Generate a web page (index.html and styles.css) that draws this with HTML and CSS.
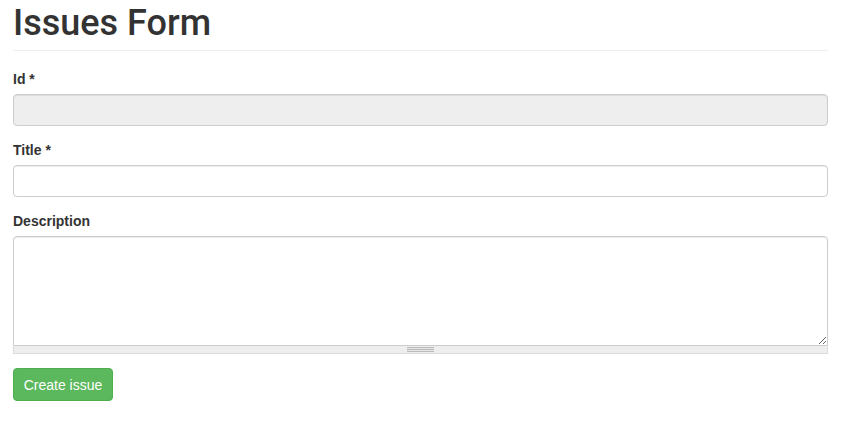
FILE: index.html
```html
<!DOCTYPE html>
<html>
<head>
<meta charset="utf-8">
<link rel="stylesheet" href="styles.css">
</head>
<body>
<div class="container">
  <h1 class="page-header">Issues Form</h1>
  <form class="form">
    <div class="form-group">
      <label class="label">Id *</label>
      <input class="input" type="text" disabled>
    </div>
    <div class="form-group">
      <label class="label">Title *</label>
      <input class="input" type="text">
    </div>
    <div class="form-group">
      <label class="label">Description</label>
      <div class="textarea-wrap">
        <textarea class="textarea"></textarea>
        <div class="grippie"><span class="grip"></span></div>
      </div>
    </div>
    <button type="button" class="btn">Create issue</button>
  </form>
</div>
</body>
</html>
```
FILE: styles.css
```css
* { box-sizing: border-box; }
html, body { margin: 0; padding: 0; background: #fff; }
body {
  font-family: "Liberation Sans", Arial, Helvetica, sans-serif;
  font-size: 14px;
  color: #333;
}
.container {
  width: 815px;
  margin-left: 13px;
}
.page-header {
  margin: 0;
  padding: 3px 0 7px;
  font-family: Roboto, "Liberation Sans", sans-serif;
  font-size: 36px;
  line-height: 40px;
  font-weight: 500;
  color: #333;
  border-bottom: 1px solid #eee;
}
.form { padding-top: 18px; }
.form-group {
  display: flex;
  flex-direction: column;
  margin-bottom: 14px;
}
.label {
  display: block;
  font-weight: bold;
  line-height: 20px;
  margin-bottom: 5px;
}
.input {
  display: block;
  width: 100%;
  height: 32px;
  padding: 6px 12px;
  font: inherit;
  color: #555;
  background: #fff;
  border: 1px solid #ccc;
  border-radius: 4px;
  box-shadow: inset 0 1px 1px rgba(0,0,0,.075);
  outline: none;
}
.input:disabled {
  background: #eee;
}
.textarea-wrap {
  display: flex;
  flex-direction: column;
}
.textarea {
  display: block;
  width: 100%;
  height: 110px;
  padding: 6px 12px;
  font: inherit;
  border: 1px solid #ccc;
  border-radius: 4px 4px 0 0;
  box-shadow: inset 0 1px 1px rgba(0,0,0,.075);
  resize: vertical;
  outline: none;
}
.grippie {
  height: 8px;
  background: #eee;
  border: 1px solid #ddd;
  border-top: 0;
  display: flex;
  justify-content: center;
  align-items: center;
}
.grip {
  display: block;
  width: 27px;
  height: 5px;
  background: repeating-linear-gradient(to bottom, #bbb 0, #bbb 1px, #e4e4e4 1px, #e4e4e4 2px);
}
.btn {
  display: inline-block;
  width: 100px;
  height: 33px;
  padding: 6px 0;
  font: inherit;
  font-size: 14px;
  line-height: 20px;
  white-space: nowrap;
  text-align: center;
  color: #fff;
  background: #5cb85c;
  border: 1px solid #4cae4c;
  border-radius: 4px;
  cursor: pointer;
}
```
